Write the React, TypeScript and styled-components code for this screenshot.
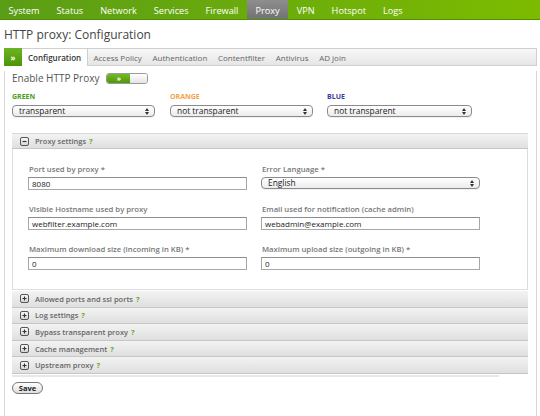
import React from "react";
import styled, { createGlobalStyle } from "styled-components";

const GlobalStyle = createGlobalStyle`
  html, body { margin: 0; padding: 0; background: #fff; }
  body { font-family: "Open Sans", "DejaVu Sans", sans-serif; color: #333; }
  * { box-sizing: border-box; }
`;

const Page = styled.div`
  width: 540px;
  height: 416px;
  overflow: hidden;
`;

const NavBar = styled.nav`
  display: flex;
  height: 20px;
  background: linear-gradient(to right, #5a9d16, #7dbb00);
  border-bottom: 1px solid #4f8f05;
`;

const NavItem = styled.a<{ $active?: boolean }>`
  display: flex;
  align-items: center;
  padding: 1px 8.5px 0;
  height: 100%;
  font-size: 9.2px;
  color: #fff;
  text-decoration: none;
  background: ${(p) => (p.$active ? "linear-gradient(#8e8e8e, #727272)" : "transparent")};
`;

const Title = styled.h1`
  margin: 0;
  padding: 0 4px;
  height: 28px;
  line-height: 29px;
  font-size: 12px;
  font-weight: 400;
  color: #444;
`;

const TabStrip = styled.div`
  display: flex;
  height: 18px;
  margin: 0 3px 0 4px;
  border: 1px solid #cfcfcf;
  border-left: none;
  background: linear-gradient(#f7f7f7, #e6e6e6);
`;

const TabToggle = styled.div`
  width: 18px;
  margin: -1px 0;
  display: flex;
  align-items: center;
  justify-content: center;
  background: linear-gradient(#6db422, #4b9505);
  color: #fff;
  font-size: 8px;
  font-weight: 700;
`;

const Tab = styled.div<{ $active?: boolean }>`
  display: flex;
  align-items: center;
  padding: ${(p) => (p.$active ? "0 6px" : "0 5.3px")};
  font-size: 8px;
  color: ${(p) => (p.$active ? "#333" : "#666")};
  font-weight: ${(p) => (p.$active ? 600 : 400)};
  background: ${(p) => (p.$active ? "#fff" : "transparent")};
  border-right: ${(p) => (p.$active ? "1px solid #cfcfcf" : "none")};
  margin-bottom: ${(p) => (p.$active ? "-1px" : "0")};
`;

const Content = styled.div`
  height: 347px;
  margin: 0 3px 0 4px;
  padding: 0 8px 0 7px;
  border: 1px solid #d8d8d8;
  border-top: none;
`;

const EnableRow = styled.div`
  display: flex;
  align-items: center;
  gap: 7px;
  height: 14px;
  margin-top: 5px;
  font-size: 10px;
  color: #555;
`;

const Toggle = styled.div`
  display: flex;
  width: 42px;
  height: 11px;
  border: 1px solid #9a9a9a;
  border-radius: 3px;
  overflow: hidden;
`;

const ToggleOn = styled.div`
  width: 23px;
  display: flex;
  align-items: center;
  justify-content: center;
  background: linear-gradient(#74b928, #4f9806);
  color: #fff;
  font-size: 7px;
  font-weight: 700;
`;

const ToggleOff = styled.div`
  flex: 1;
  background: linear-gradient(#fff, #e4e4e4);
`;

const Zones = styled.div`
  display: grid;
  grid-template-columns: 158px 157px 1fr;
  margin-top: 7px;
`;

const ZoneLabel = styled.div<{ $color: string }>`
  height: 10px;
  line-height: 10px;
  font-size: 7px;
  font-weight: 700;
  color: ${(p) => p.$color};
  margin-bottom: 3px;
`;

const SelectBox = styled.div<{ $width: number }>`
  position: relative;
  width: ${(p) => p.$width}px;
  height: 12px;
  border: 1px solid #8a8a8a;
  border-radius: 4px;
  background: linear-gradient(#ffffff, #ececec);
  font-size: 8.4px;
  line-height: 10px;
  padding-left: 6px;
  color: #222;
  box-shadow: 0 1px 0 rgba(0, 0, 0, 0.06);
`;

const Arrows = styled.svg`
  position: absolute;
  right: 5px;
  top: 2px;
`;

const Select = ({ value, width }: { value: string; width: number }) => (
  <SelectBox $width={width}>
    {value}
    <Arrows width="4" height="7" viewBox="0 0 4 7">
      <path d="M0 3 L2 0 L4 3 Z M0 4 L2 7 L4 4 Z" fill="#333" />
    </Arrows>
  </SelectBox>
);

const Panel = styled.div`
  margin-top: 16px;
`;

const PanelHeader = styled.div<{ $first?: boolean }>`
  display: flex;
  align-items: center;
  gap: 6px;
  height: ${(p) => (p.$first ? "16px" : "16.6px")};
  padding-left: 8px;
  border-top: ${(p) => (p.$first ? "1px solid #d8d8d8" : "none")};
  border-bottom: 1px solid #c6c6c6;
  background: linear-gradient(#f3f3f3, #dfdfdf);
  font-size: 7.5px;
  font-weight: 600;
  color: #666;
`;

const Help = styled.span`
  color: #6aa51c;
  font-weight: 700;
  margin-left: 3px;
`;

const PanelBody = styled.div`
  display: grid;
  grid-template-columns: 233px 1fr;
  row-gap: 14px;
  padding: 15px 0 19px 15px;
  border: 1px solid #dcdcdc;
  border-top: none;
`;

const Field = styled.div`
  display: flex;
  flex-direction: column;
`;

const FieldLabel = styled.div`
  height: 10px;
  line-height: 10px;
  font-size: 7.7px;
  font-weight: 600;
  color: #777;
  margin-bottom: 3px;
  padding-left: 1px;
`;

const TextInput = styled.div`
  width: 219px;
  height: 13px;
  border: 1px solid #a8a8a8;
  border-top-color: #8c8c8c;
  background: #fff;
  font-size: 8px;
  line-height: 11px;
  padding-left: 3px;
  color: #222;
`;

const Collapsed = styled.div`
  margin-top: 1px;
`;

const Rule = styled.div`
  width: 487px;
  height: 2px;
  margin-top: 1px;
  background: #e8e8e8;
`;

const SaveButton = styled.button`
  display: block;
  margin-top: 5px;
  width: 31px;
  height: 12px;
  padding: 0;
  border: 1px solid #777;
  border-radius: 6px;
  background: linear-gradient(#fff, #dedede);
  font-family: inherit;
  font-size: 7.5px;
  font-weight: 700;
  color: #222;
  line-height: 10px;
`;

const BoxIcon = ({ open }: { open?: boolean }) => (
  <svg width="9" height="9" viewBox="0 0 9 9">
    <defs>
      <linearGradient id={open ? "bm" : "bp"} x1="0" y1="0" x2="0" y2="1">
        <stop offset="0" stopColor="#fafafa" />
        <stop offset="1" stopColor="#d4d4d4" />
      </linearGradient>
    </defs>
    <rect x="0.5" y="0.5" width="8" height="8" rx="1.5" fill={`url(#${open ? "bm" : "bp"})`} stroke="#555" />
    <path d={open ? "M2.5 4.5 H6.5" : "M2.5 4.5 H6.5 M4.5 2.5 V6.5"} stroke="#333" strokeWidth="1.1" />
  </svg>
);

const navItems = ["System", "Status", "Network", "Services", "Firewall", "Proxy", "VPN", "Hotspot", "Logs"];
const tabs = ["Configuration", "Access Policy", "Authentication", "Contentfilter", "Antivirus", "AD join"];
const sections = [
  "Allowed ports and ssl ports",
  "Log settings",
  "Bypass transparent proxy",
  "Cache management",
  "Upstream proxy",
];

export default function App() {
  return (
    <Page>
      <GlobalStyle />
      <NavBar>
        {navItems.map((n) => (
          <NavItem key={n} $active={n === "Proxy"}>
            {n}
          </NavItem>
        ))}
      </NavBar>
      <Title>HTTP proxy: Configuration</Title>
      <TabStrip>
        <TabToggle>»</TabToggle>
        {tabs.map((t, i) => (
          <Tab key={t} $active={i === 0}>
            {t}
          </Tab>
        ))}
      </TabStrip>
      <Content>
        <EnableRow>
          Enable HTTP Proxy
          <Toggle>
            <ToggleOn>»</ToggleOn>
            <ToggleOff />
          </Toggle>
        </EnableRow>
        <Zones>
          <div>
            <ZoneLabel $color="#4c9c1c">GREEN</ZoneLabel>
            <Select value="transparent" width={143} />
          </div>
          <div>
            <ZoneLabel $color="#f2a24a">ORANGE</ZoneLabel>
            <Select value="not transparent" width={143} />
          </div>
          <div>
            <ZoneLabel $color="#3b3b9c">BLUE</ZoneLabel>
            <Select value="not transparent" width={145} />
          </div>
        </Zones>
        <Panel>
          <PanelHeader $first>
            <BoxIcon open />
            <span>
              Proxy settings<Help>?</Help>
            </span>
          </PanelHeader>
          <PanelBody>
            <Field>
              <FieldLabel>Port used by proxy *</FieldLabel>
              <TextInput>8080</TextInput>
            </Field>
            <Field>
              <FieldLabel>Error Language *</FieldLabel>
              <Select value="English" width={219} />
            </Field>
            <Field>
              <FieldLabel>Visible Hostname used by proxy</FieldLabel>
              <TextInput>webfilter.example.com</TextInput>
            </Field>
            <Field>
              <FieldLabel>Email used for notification (cache admin)</FieldLabel>
              <TextInput>webadmin@example.com</TextInput>
            </Field>
            <Field>
              <FieldLabel>Maximum download size (incoming in KB) *</FieldLabel>
              <TextInput>0</TextInput>
            </Field>
            <Field>
              <FieldLabel>Maximum upload size (outgoing in KB) *</FieldLabel>
              <TextInput>0</TextInput>
            </Field>
          </PanelBody>
          <Collapsed>
            {sections.map((s) => (
              <PanelHeader key={s}>
                <BoxIcon />
                <span>
                  {s}
                  <Help>?</Help>
                </span>
              </PanelHeader>
            ))}
          </Collapsed>
        </Panel>
        <Rule />
        <SaveButton>Save</SaveButton>
      </Content>
    </Page>
  );
}
